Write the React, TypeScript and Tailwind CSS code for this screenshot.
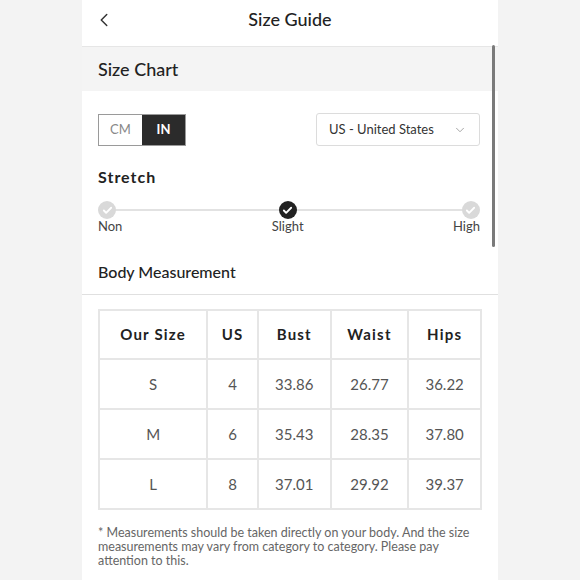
import { Check, ChevronDown, ChevronLeft } from 'lucide-react'

const rows = [
  ['S', '4', '33.86', '26.77', '36.22'],
  ['M', '6', '35.43', '28.35', '37.80'],
  ['L', '8', '37.01', '29.92', '39.37'],
]

const heads = ['Our Size', 'US', 'Bust', 'Waist', 'Hips']
const cols = ['w-[109px]', 'w-[51px]', 'w-[73px]', 'w-[78px]', 'w-[73px]']

function StretchDot({ active }: { active?: boolean }) {
  return (
    <div
      className={`flex h-[18px] w-[18px] items-center justify-center rounded-full ${
        active ? 'bg-[#222]' : 'bg-[#d9d9d9]'
      }`}
    >
      <Check className="h-[11px] w-[11px] text-white" strokeWidth={4} />
    </div>
  )
}

export default function App() {
  return (
    <div
      className="flex h-[580px] w-[580px] justify-center overflow-hidden bg-[#f3f3f3] text-[#222]"
      style={{ fontFamily: 'Lato, "Open Sans", sans-serif' }}
    >
      <div className="relative w-[416px] bg-white">
        {/* header */}
        <div className="relative flex h-[47px] items-start justify-center border-b border-[#e6e6e6] pt-[8px]">
          <ChevronLeft className="absolute left-[11px] top-[9px] h-[22px] w-[22px] text-[#333]" strokeWidth={1.6} />
          <span className="text-[18px] font-medium leading-[22px]">Size Guide</span>
        </div>

        <div className="absolute right-[3px] top-[45px] h-[202px] w-[3px] rounded-full bg-[#7a7a7a]" />

        <div className="flex h-[44px] items-center bg-[#f4f4f4] px-4">
          <span className="text-[18px] font-medium">Size Chart</span>
        </div>

        <div className="px-4 pt-[22px]">
          <div className="flex items-center justify-between">
            <div className="flex h-[32px] border border-[#9a9a9a]">
              <div className="flex w-[43px] items-center justify-center text-[13px] text-[#888]">CM</div>
              <div className="flex w-[43px] items-center justify-center bg-[#2b2b2b] text-[13px] font-bold text-white">IN</div>
            </div>
            <div className="mr-[2px] flex h-[33px] w-[164px] items-center justify-between rounded-[3px] border border-[#dcdcdc] pl-3 pr-3">
              <span className="text-[13px] text-[#333]">US - United States</span>
              <ChevronDown className="h-[14px] w-[14px] text-[#999]" strokeWidth={1.5} />
            </div>
          </div>

          <div className="mt-[19px] text-[16px] font-bold tracking-[1px]">Stretch</div>

          <div className="relative mt-[12px] pr-[2px]">
            <div className="absolute left-[8px] right-[10px] top-[8px] h-[2px] bg-[#e2e2e2]" />
            <div className="relative flex justify-between">
              <div className="flex flex-col items-start">
                <StretchDot />
                <span className="text-[13px] leading-[15px] text-[#444]">Non</span>
              </div>
              <div className="flex flex-col items-center">
                <StretchDot active />
                <span className="text-[13px] leading-[15px] text-[#444]">Slight</span>
              </div>
              <div className="flex flex-col items-end">
                <StretchDot />
                <span className="text-[13px] leading-[15px] text-[#444]">High</span>
              </div>
            </div>
          </div>
        </div>

        <div className="mt-[26px] border-b border-[#e0e0e0] px-4 pb-[10px]">
          <span className="text-[16px] font-medium">Body Measurement</span>
        </div>

        <div className="px-4 pt-[14px]">
          <table className="border-collapse border-2 border-[#e6e6e6]">
            <thead>
              <tr>
                {heads.map((h, i) => (
                  <th
                    key={h}
                    className={`${cols[i]} h-[49px] border-2 border-[#e6e6e6] text-center text-[15px] font-bold tracking-[1.2px]`}
                  >
                    {h}
                  </th>
                ))}
              </tr>
            </thead>
            <tbody>
              {rows.map((r) => (
                <tr key={r[0]}>
                  {r.map((c, i) => (
                    <td
                      key={i}
                      className="h-[50px] border-2 border-[#e6e6e6] text-center text-[15px] text-[#555]"
                    >
                      {c}
                    </td>
                  ))}
                </tr>
              ))}
            </tbody>
          </table>

          <p className="mt-[16px] text-[12.5px] leading-[14px] text-[#666]">
            * Measurements should be taken directly on your body. And the size measurements may vary from category to category. Please pay attention to this.
          </p>
        </div>
      </div>
    </div>
  )
}
